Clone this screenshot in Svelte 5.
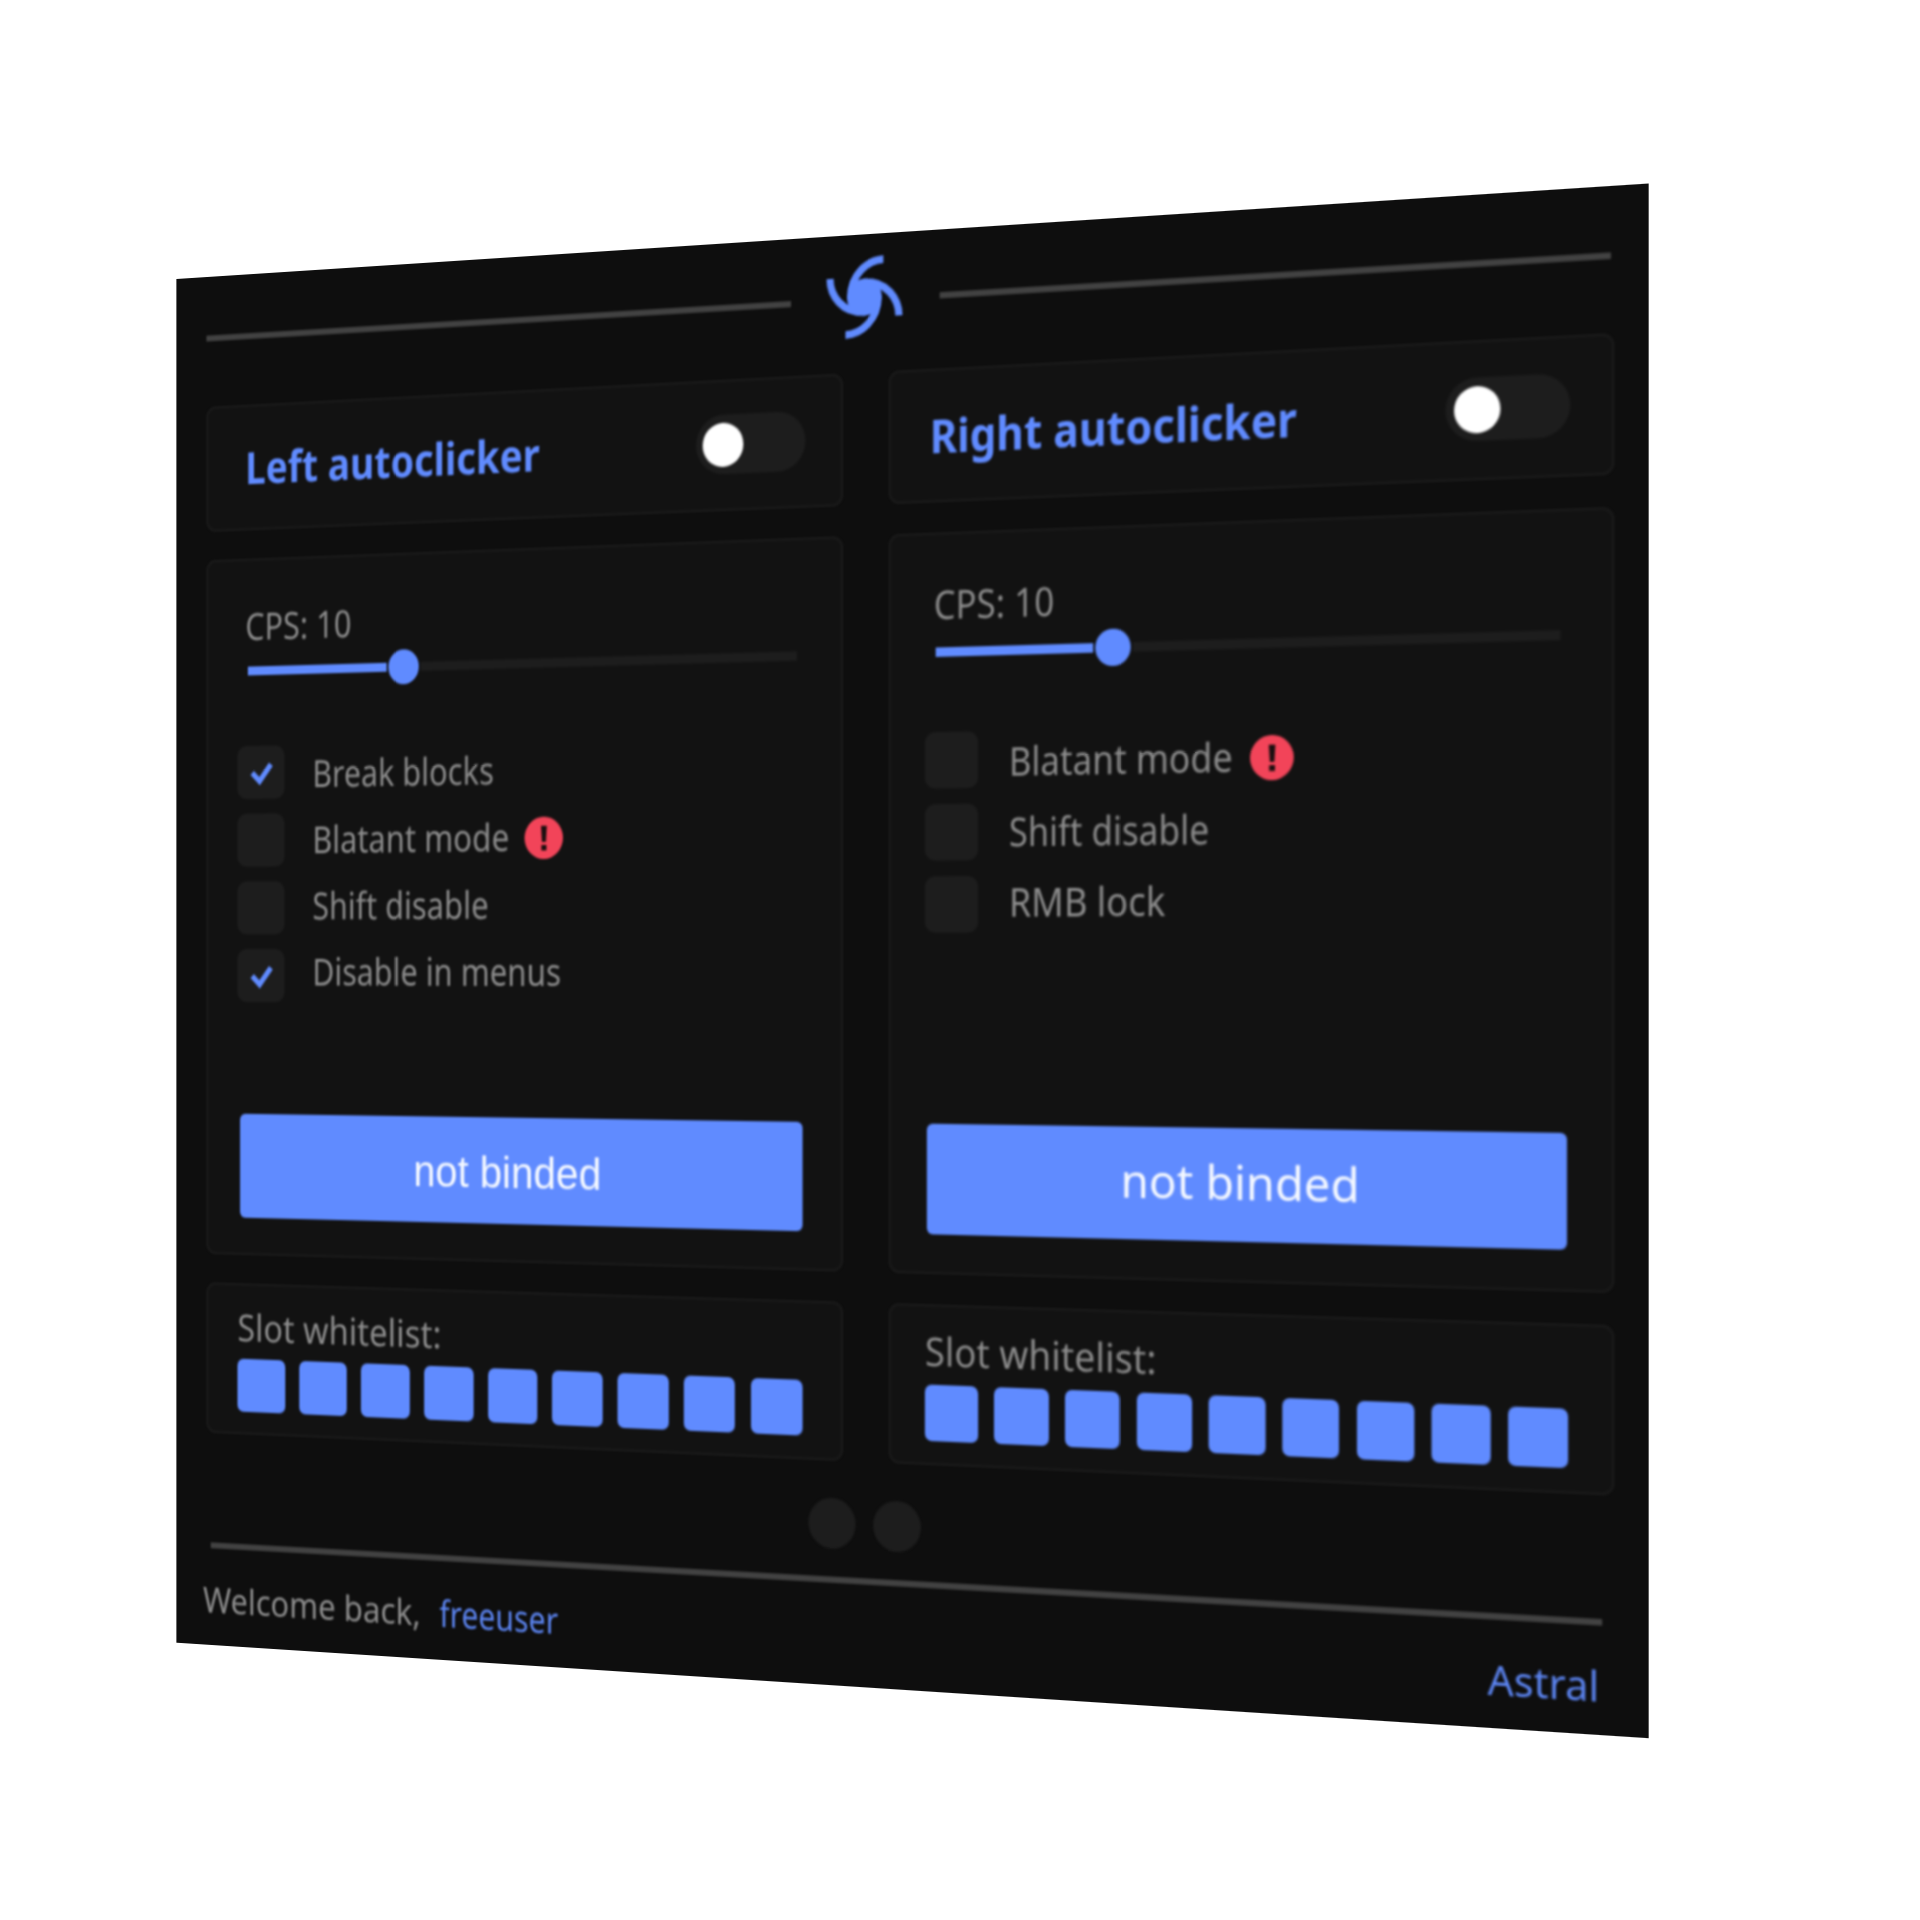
<script>
  const columns = [
    {
      title: 'Left autoclicker',
      titleWidth: 331,
      options: [
        { label: 'Break blocks', width: 203, checked: true },
        { label: 'Blatant mode', width: 220, warn: true },
        { label: 'Shift disable', width: 197.5 },
        { label: 'Disable in menus', width: 277, checked: true }
      ],
      bind: { width: 207, plain: true }
    },
    {
      title: 'Right autoclicker',
      titleWidth: 362,
      wide: true,
      options: [
        { label: 'Blatant mode', width: 220, warn: true },
        { label: 'Shift disable', width: 197.5 },
        { label: 'RMB lock', width: 155 }
      ],
      bind: { width: 231, plain: false }
    }
  ];
  const slots = Array.from({ length: 9 }, (_, i) => i);

  // Condense a run of text horizontally so it fills the given width.
  function fit(node, width) {
    node.style.transform = `scaleX(${width / node.offsetWidth})`;
  }
</script>

{#snippet fitted(text, width)}
  <span class="fit" style:width="{width}px"><span class="ink" use:fit={width}>{text}</span></span>
{/snippet}

<div class="stage">
  <main class="panel">
    <div class="content">
      <header>
        <i class="rule"></i>
        <svg class="logo" viewBox="-40 -40.5 80 81">
          <circle r="17.8" />
          {#each [0, 90, 180, 270] as angle}
            <path transform="rotate({angle})" d="M19.5 -35.5C4 -35.5 -15 -23 -14.2 1" />
          {/each}
        </svg>
        <i class="rule"></i>
      </header>

      <div class="columns">
        {#each columns as col}
          <section class="column">
            <div class="card head" class:wide={col.wide}>
              <h2>{@render fitted(col.title, col.titleWidth)}</h2>
              <span class="toggle"><i></i></span>
            </div>

            <div class="card body">
              <div class="cps">{@render fitted('CPS: 10', 121)}</div>
              <div class="slider"><i class="fill"></i><i class="knob"></i><i class="rest"></i></div>
              <div class="options">
                <div class="boxes">
                  {#each col.options as o}
                    <span class="box">
                      {#if o.checked}
                        <svg viewBox="0 0 28 24"><path d="M3 11.5L11.5 20L24.5 3" /></svg>
                      {/if}
                    </span>
                  {/each}
                </div>
                <div class="labels">
                  {#each col.options as o}
                    <div class="label">
                      {@render fitted(o.label, o.width)}
                      {#if o.warn}
                        <svg class="warn" viewBox="0 0 42 42">
                          <circle cx="21" cy="21" r="21" />
                          <path d="M18 9h6.4l-1 16h-4.4zM18.4 28h5.6v5.4h-5.6z" />
                        </svg>
                      {/if}
                    </div>
                  {/each}
                </div>
              </div>
              <div class="bind" class:plain={col.bind.plain}>{@render fitted('not binded', col.bind.width)}</div>
            </div>

            <div class="card whitelist">
              <div class="caption">{@render fitted('Slot whitelist:', 231)}</div>
              <div class="slots">
                {#each slots as s (s)}<i></i>{/each}
              </div>
            </div>
          </section>
        {/each}
      </div>

      <div class="dots"><i></i><i></i></div>
      <div class="rule bottom"></div>
      <footer>
        <span class="welcome">{@render fitted('Welcome back,', 248)}</span>
        <span class="user">{@render fitted('freeuser', 131)}</span>
        <span class="brand">{@render fitted('Astral', 102)}</span>
      </footer>
    </div>
  </main>
</div>

<style>
  :global(body) {
    background: #fff;
  }
  .stage {
    width: 1920px;
    height: 1920px;
    overflow: hidden;
  }
  .panel {
    width: 1510px;
    height: 1400px;
    background: #0e0e0e;
    color: #8b8b8b;
    font-family: 'Noto Sans', 'Open Sans', sans-serif;
    font-size: 38px;
    line-height: 40px;
    transform-origin: 0 0;
    transform: matrix3d(0.840894, -0.078172, 0, -0.0000813576, 0, 0.974071, 0, 0, 0, 0, 1, 0, 176.4, 279, 0, 1);
  }
  .panel * {
    box-sizing: border-box;
  }
  .content {
    height: 1400px;
    display: flex;
    flex-direction: column;
    filter: blur(1.1px);
  }
  i {
    display: block;
  }
  .fit {
    display: inline-block;
    white-space: nowrap;
  }
  .ink {
    display: inline-block;
    transform-origin: 0 50%;
  }
  header {
    height: 126px;
    padding: 0 34px 0 34.5px;
    display: flex;
    align-items: center;
  }
  .rule {
    flex: 1;
    height: 6px;
    background: #424242;
  }
  .logo {
    width: 80px;
    height: 81px;
    margin: 0 36.5px 6px;
    overflow: visible;
    fill: #608bff;
  }
  .logo path {
    fill: none;
    stroke: #608bff;
    stroke-width: 7.4;
  }
  .columns {
    margin-top: 7px;
    padding: 0 31.5px 0 34.5px;
    display: grid;
    grid-template-columns: 1fr 1fr;
    column-gap: 47px;
  }
  .column {
    display: flex;
    flex-direction: column;
    gap: 29px;
  }
  .card {
    background: #121212;
    border: 2px solid #1c1c1c;
    border-radius: 11px;
  }
  .head {
    height: 128px;
    padding: 0 37.5px 2px 43.5px;
    display: flex;
    align-items: center;
    justify-content: space-between;
  }
  .head.wide {
    padding-left: 40px;
  }
  h2 {
    margin: 1px 0 0;
    font-size: 45px;
    font-weight: 700;
    line-height: 60px;
    color: #608bff;
  }
  .toggle {
    width: 115px;
    height: 58px;
    padding: 7.5px;
    border-radius: 29px;
    background: #1d1d1d;
  }
  .toggle i {
    width: 43px;
    height: 43px;
    border-radius: 50%;
    background: #fff;
  }
  .body {
    height: 709.5px;
    padding: 45.5px 40px 35.5px 34.5px;
    display: flex;
    flex-direction: column;
  }
  .cps {
    height: 40px;
    margin-left: 9px;
  }
  .slider {
    width: 602px;
    height: 35px;
    margin: 9.5px 0 0 11.5px;
    display: flex;
    align-items: center;
  }
  .fill {
    width: 158px;
    height: 9.5px;
    background: #608bff;
  }
  .knob {
    width: 34.5px;
    height: 34.5px;
    margin: 0 2px;
    border-radius: 50%;
    background: #608bff;
  }
  .rest {
    flex: 1;
    height: 9.5px;
    background: #1d1d1d;
  }
  .options {
    margin-top: 59px;
    display: flex;
    gap: 31.5px;
  }
  .boxes {
    display: flex;
    flex-direction: column;
    gap: 15px;
  }
  .box {
    width: 54px;
    height: 54px;
    border-radius: 10px;
    background: #1d1d1d;
    display: flex;
    align-items: center;
    justify-content: center;
  }
  .box svg {
    width: 28px;
    height: 24px;
    margin: 2px 0 0 1px;
    overflow: visible;
    fill: none;
    stroke: #608bff;
    stroke-width: 5.6;
  }
  .labels {
    margin-top: -6px;
  }
  .label {
    height: 67.2px;
    display: flex;
    align-items: center;
  }
  .warn {
    width: 42px;
    height: 42px;
    margin: 4px 0 0 17px;
    fill: #f24459;
  }
  .warn path {
    fill: #1a0f10;
  }
  .bind {
    width: 617px;
    height: 106px;
    margin: auto 0 0 2.5px;
    padding-right: 9px;
    border-radius: 6px;
    background: #608bff;
    color: #f4f8ff;
    font-size: 43px;
    line-height: 102px;
    text-align: center;
  }
  .bind.plain {
    padding-right: 17px;
    font-family: 'Liberation Sans', sans-serif;
    font-size: 44px;
    line-height: 109px;
  }
  .whitelist {
    height: 154.5px;
    padding: 22.5px 39px 0 34.5px;
  }
  .slots {
    width: 620px;
    margin-top: 12.5px;
    display: flex;
    justify-content: space-between;
  }
  .slots i {
    width: 54.5px;
    height: 54.5px;
    border-radius: 7px;
    background: #608bff;
  }
  .caption {
    height: 40px;
  }
  .dots {
    margin-top: 36px;
    display: flex;
    justify-content: center;
    gap: 18.5px;
  }
  .dots i {
    width: 49px;
    height: 49px;
    border-radius: 50%;
    background: #1d1d1d;
  }
  .rule.bottom {
    flex: none;
    margin: 27.3px 42px 0 40px;
  }
  footer {
    margin-top: 32px;
    padding: 0 45px 0 31px;
    display: flex;
  }
  .welcome {
    font-size: 37px;
  }
  .user {
    margin-left: 21px;
    font-size: 37px;
    color: #5c85f2;
  }
  .brand {
    margin: 1.5px 0 0 auto;
    color: #5c85f2;
  }
</style>
